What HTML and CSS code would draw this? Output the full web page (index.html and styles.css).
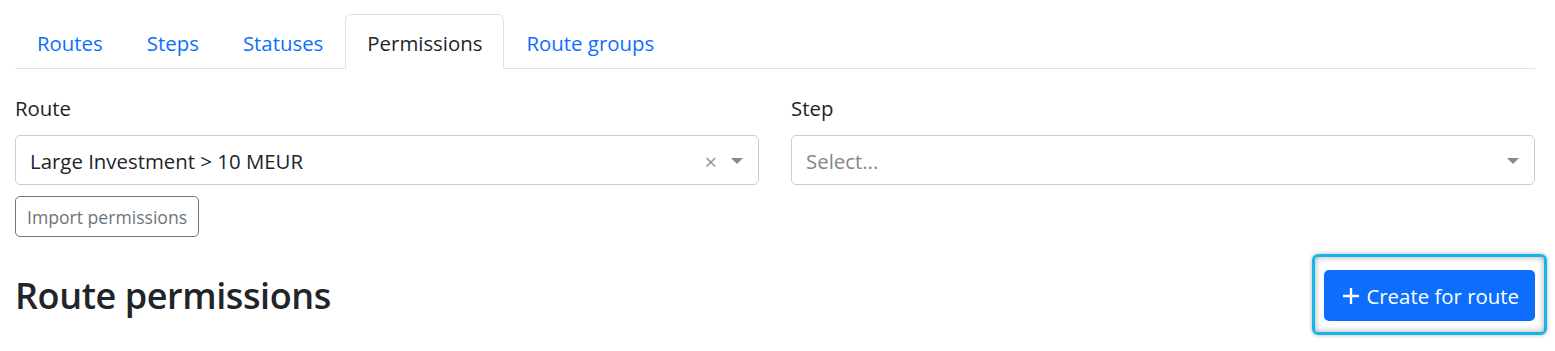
FILE: index.html
```html
<!DOCTYPE html>
<html lang="en">
<head>
  <meta charset="UTF-8" />
  <meta name="viewport" content="width=device-width, initial-scale=1.0" />
  <title>Route permissions</title>
  <link rel="stylesheet" href="styles.css">
</head>
<body>
  <div class="container">
    <nav class="tabs">
      <a class="tab" href="#">Routes</a>
      <a class="tab" href="#">Steps</a>
      <a class="tab" href="#">Statuses</a>
      <a class="tab active" href="#">Permissions</a>
      <a class="tab" href="#">Route groups</a>
    </nav>

    <div class="filters">
      <div class="field">
        <label>Route</label>
        <div class="select">
          <span class="value">Large Investment &gt; 10 MEUR</span>
          <span class="clear">&#215;</span>
          <span class="arrow"></span>
        </div>
        <button class="btn-import">Import permissions</button>
      </div>
      <div class="field">
        <label>Step</label>
        <div class="select">
          <span class="placeholder">Select...</span>
          <span class="arrow"></span>
        </div>
      </div>
    </div>

    <div class="header-row">
      <h2>Route permissions</h2>
      <button class="btn-create">
        <svg width="18" height="18" viewBox="0 0 18 18"><path d="M9 1v16M1 9h16" stroke="#fff" stroke-width="2.4" fill="none"/></svg>
        Create for route
      </button>
    </div>
  </div>
</body>
</html>
```

FILE: styles.css
```css
* {
  box-sizing: border-box;
}
body {
  margin: 0;
  background: #fff;
  color: #212529;
  font-family: 'Open Sans', 'Noto Sans', sans-serif;
  font-size: 20.4px;
}
.container {
  padding: 14px 20px 30px 15px;
}
.tabs {
  display: flex;
  border-bottom: 1px solid #dee2e6;
}
.tab {
  padding: 13px 21px 9px;
  line-height: 31px;
  margin-bottom: -1px;
  border: 1px solid transparent;
  border-radius: 6px 6px 0 0;
  color: #0d6efd;
  text-decoration: none;
}
.tab.active {
  color: #212529;
  background: #fff;
  border-color: #dee2e6 #dee2e6 #fff;
}
.filters {
  display: grid;
  grid-template-columns: 1fr 1fr;
  gap: 32px;
  margin-top: 24px;
}
.field label {
  display: block;
  line-height: 31px;
  margin-bottom: 11px;
}
.select {
  display: flex;
  align-items: center;
  height: 50px;
  padding: 1px 15px 0 14px;
  border: 1px solid #ccc;
  border-radius: 5px;
}
.value, .placeholder {
  flex: 1;
}
.placeholder {
  color: #868686;
}
.clear {
  color: #999;
  font-size: 22px;
  margin-right: 14px;
  line-height: 1;
}
.arrow {
  width: 0;
  height: 0;
  border-left: 6px solid transparent;
  border-right: 6px solid transparent;
  border-top: 6px solid #888;
}
.btn-import {
  margin-top: 11px;
  height: 41px;
  padding: 0 11px;
  background: #fff;
  border: 1px solid #6c757d;
  border-radius: 5px;
  color: #6c757d;
  font-family: inherit;
  font-size: 17.6px;
}
.header-row {
  display: flex;
  justify-content: space-between;
  align-items: center;
  margin-top: 33px;
}
h2 {
  margin: 0;
  font-size: 36px;
  font-weight: 600;
  letter-spacing: -0.4px;
  line-height: 50px;
}
.btn-create {
  position: relative;
  display: flex;
  align-items: center;
  gap: 6px;
  height: 51px;
  padding: 0 16px 0 18px;
  background: #0d6efd;
  border: none;
  border-radius: 5px;
  color: #fff;
  font-family: inherit;
  font-size: 20.4px;
}
/* highlight frame drawn over the button */
.btn-create::after {
  content: '';
  position: absolute;
  top: -16px;
  left: -12px;
  right: -12px;
  bottom: -14px;
  border: 3px solid #19b5ea;
  border-radius: 6px;
  box-shadow: inset 0 0 6px rgba(0, 0, 0, 0.35), 0 0 4px rgba(0, 0, 0, 0.3);
}
```
